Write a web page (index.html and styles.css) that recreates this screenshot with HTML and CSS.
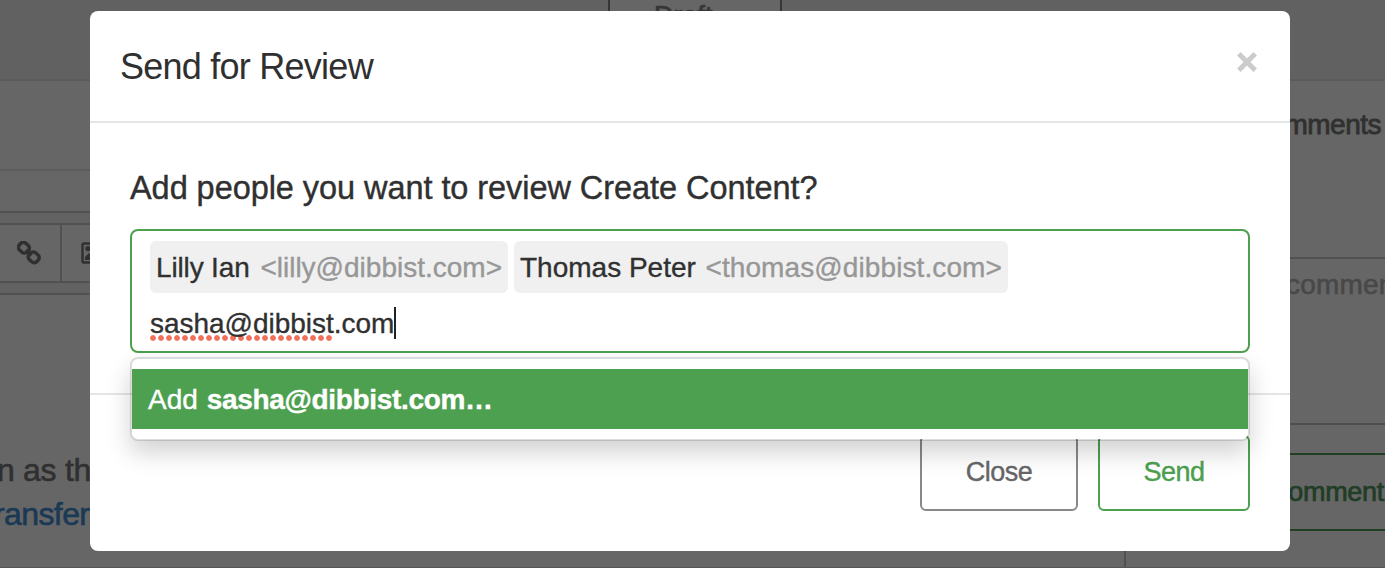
FILE: index.html
```html
<!DOCTYPE html>
<html lang="en">
<head>
<meta charset="utf-8">
<title>Send for Review</title>
<link rel="stylesheet" href="styles.css">
</head>
<body>
<div class="page">
  <header class="topbar"><div class="status"><span>Draft</span></div></header>
  <div class="workspace">
    <main class="editor">
      <div class="row-title"></div>
      <div class="row-meta"></div>
      <div class="toolbar">
        <div class="tool tool-link">
          <svg width="24" height="24" viewBox="0 0 24 24" fill="none" stroke="#303030" stroke-width="3.5">
            <rect x="1.7" y="2.1" width="10.4" height="9.2" rx="3.6" transform="rotate(42 6.9 6.7)"/>
            <rect x="11.5" y="11.7" width="10.4" height="9.2" rx="3.6" transform="rotate(42 16.7 16.3)"/>
            <path d="M9 9l5.4 5.4"/>
          </svg>
        </div>
        <div class="tool tool-image">
          <svg width="28" height="22" viewBox="0 0 28 22">
            <rect x="1.5" y="1.5" width="25" height="19" rx="1.5" fill="none" stroke="#303030" stroke-width="2.4"/>
            <circle cx="7" cy="6.6" r="2.7" fill="#303030"/>
            <path d="M4 18v-3l4-4 3 3 6-7 7 7v4z" fill="#303030"/>
          </svg>
        </div>
      </div>
      <div class="copy">
        <p>n as the</p>
        <p class="link">ransfer</p>
      </div>
    </main>
    <aside class="sidebar">
      <h2 class="side-title">Comments</h2>
      <div class="side-input">comment</div>
      <div class="side-button">Comment</div>
    </aside>
  </div>
</div>

<section class="modal">
  <header class="modal-header">
    <h1 class="title">Send for Review</h1>
    <svg class="close" width="20" height="20" viewBox="0 0 20 20"><path d="M1.8 1.8L18.2 18.2M18.2 1.8L1.8 18.2" stroke="#ccc" stroke-width="5"/></svg>
  </header>
  <div class="modal-body">
    <p class="question">Add people you want to review Create Content?</p>
    <div class="field">
      <div class="tokens">
        <div class="token token-lilly"><span class="name">Lilly Ian</span><span class="mail">&lt;lilly@dibbist.com&gt;</span></div>
        <div class="token token-thomas"><span class="name">Thomas Peter</span><span class="mail">&lt;thomas@dibbist.com&gt;</span></div>
      </div>
      <div class="entry"><span class="typed"><span class="misspelt">sasha@dibbist</span>.com</span><i class="caret"></i></div>
      <div class="dropdown"><div class="option"><span class="add">Add</span><b class="candidate">sasha@dibbist.com…</b></div></div>
    </div>
  </div>
  <footer class="modal-footer">
    <div class="btn btn-close"><span>Close</span></div>
    <div class="btn btn-send"><span>Send</span></div>
  </footer>
</section>
</body>
</html>
```
FILE: styles.css
```css
* { box-sizing: border-box; }
body { margin: 0; overflow: hidden; font-family: "Liberation Sans", Arial, sans-serif; color: #303030; font-size: 28px; background: #666; }
h1, h2, p { margin: 0; font-weight: 400; }

.page { width: 1385px; height: 568px; display: flex; flex-direction: column; overflow: hidden; border-bottom: 1px solid #565656; }
.topbar { height: 81px; flex: none; background: #616161; border-bottom: 2px solid #5b5b5b; padding-left: 608px; }
.status { width: 174px; height: 33px; background: #666; border: 2px solid #363636; border-top: 0; padding-left: 44px; line-height: 33px; font-size: 27px; color: #363636; -webkit-text-stroke: 0.7px; }
.workspace { display: flex; flex: 1; min-height: 0; }
.editor { width: 1124px; flex: none; }
.row-title { height: 90px; border-bottom: 2px solid #5c5c5c; }
.row-meta { height: 42px; border-bottom: 2px solid #515151; }
.toolbar { height: 82px; border-bottom: 2px solid #515151; background: #626262; padding: 10px 0; display: flex; }
.tool { height: 60px; background: #666; border: 2px solid #515151; border-left: 0; display: flex; align-items: center; }
.tool-link { width: 62px; padding-left: 17px; }
.tool-image { width: 80px; padding-left: 19px; }
.copy { padding-top: 153px; margin-left: -3px; font-size: 32px; line-height: 44px; letter-spacing: -0.3px; -webkit-text-stroke: 0.6px; }
.copy .link { color: #1a3955; margin-left: -3px; letter-spacing: -0.6px; }
.sidebar { flex: 1; border-left: 2px solid #515151; overflow: hidden; white-space: nowrap; }
.side-title { height: 178px; padding: 26px 4px 0 0; text-align: right; font-size: 28px; line-height: 36px; letter-spacing: -0.5px; border-bottom: 2px solid #515151; -webkit-text-stroke: 0.8px; }
.side-input { height: 166px; padding: 8px 0 0 160px; line-height: 36px; border-bottom: 2px solid #4e4e4e; color: #484848; font-size: 28px; letter-spacing: 0.2px; -webkit-text-stroke: 0.6px; }
.side-button { height: 78px; margin-top: 28px; border: 2px solid #203d25; border-right: 0; padding: 18px 1px 0 0; text-align: right; line-height: 38px; color: #203d25; font-size: 27px; letter-spacing: -0.3px; -webkit-text-stroke: 0.7px; }

.modal { position: absolute; left: 90px; top: 11px; width: 1200px; height: 540px; background: #fff; border-radius: 8px; display: flex; flex-direction: column; white-space: nowrap; }
.modal-header { height: 112px; border-bottom: 2px solid #e5e5e5; display: flex; justify-content: space-between; padding: 35px 33px 0 30px; }
.title { font-size: 36px; line-height: 42px; letter-spacing: -0.75px; }
.close { margin-top: 6px; }
.modal-body { height: 272px; border-bottom: 2px solid #e5e5e5; padding: 44px 40px 0; }
.question { height: 62px; font-size: 32.5px; line-height: 42px; letter-spacing: -0.06px; -webkit-text-stroke: 0.4px; }
.field { position: relative; height: 124px; border: 2px solid #4da04f; border-radius: 8px; padding: 10px 18px 0; }
.tokens { display: flex; gap: 6px; }
.token { height: 52px; background: #f0f0f0; border-radius: 6px; display: flex; justify-content: space-between; padding: 0 6px; line-height: 53px; -webkit-text-stroke: 0.35px; }
.token-lilly { width: 358px; }
.token-lilly .name { letter-spacing: -0.15px; }
.token-thomas { width: 494px; }
.token-thomas .mail { letter-spacing: 0.1px; }
.mail { color: #979797; }
.entry { display: flex; align-items: center; height: 60px; }
.typed { line-height: 36px; -webkit-text-stroke: 0.35px; letter-spacing: -0.03px; }
.misspelt { display: inline-block; height: 36px; line-height: 37px; background: radial-gradient(circle at 3px 3px, #f0705c 2.4px, #f0705c00 3.3px) left bottom / 8px 6px repeat-x; }
.caret { width: 2px; height: 32px; background: #222; }
.dropdown { position: absolute; z-index: 1; left: -2px; top: 126px; width: 1120px; height: 84px; background: #fff; background-clip: padding-box; border: 2px solid rgba(0,0,0,.13); border-radius: 8px; box-shadow: 0 12px 24px rgba(0,0,0,.175); padding: 10px 0; }
.option { height: 60px; background: #4da04f; color: #fff; line-height: 61px; padding-left: 16px; display: flex; gap: 9px; -webkit-text-stroke: 0.4px; }
.candidate { letter-spacing: -0.33px; }
.modal-footer { flex: 1; padding: 40px 40px 0; display: flex; justify-content: flex-end; gap: 20px; }
.btn { height: 76px; border: 2px solid; border-radius: 6px; display: flex; justify-content: center; line-height: 71px; font-size: 27px; letter-spacing: -0.5px; -webkit-text-stroke: 0.4px; }
.btn-close { width: 158px; border-color: #888; color: #666; }
.btn-send { width: 152px; border-color: #4da04f; color: #4da04f; }
```
